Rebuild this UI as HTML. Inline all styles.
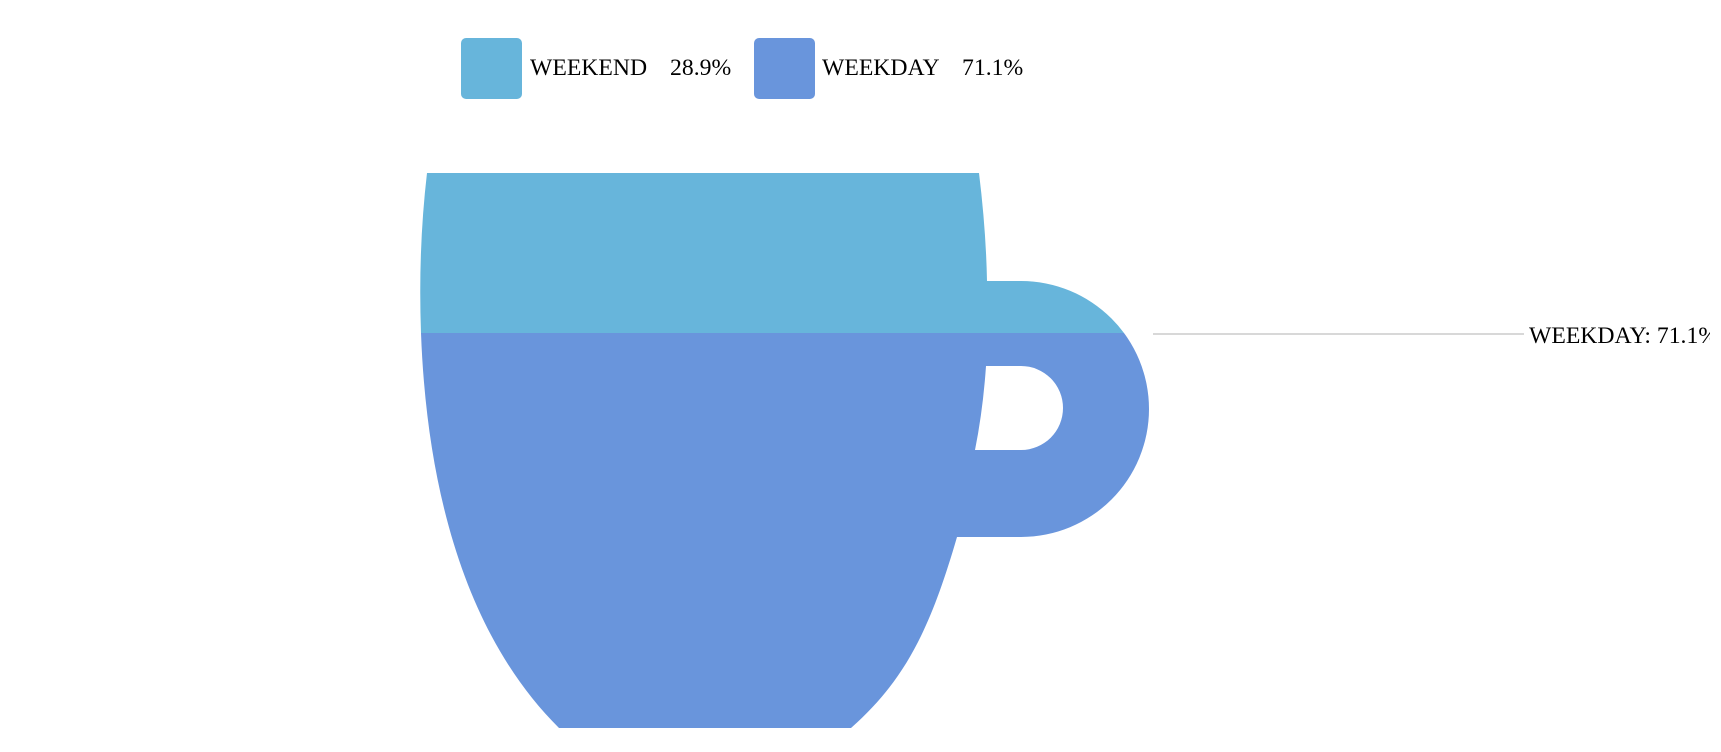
<!DOCTYPE html>
<html><head><meta charset="utf-8"><style>
html,body{margin:0;padding:0;background:#fff;width:1721px;height:752px;overflow:hidden}
svg{display:block}
text{font-family:"Liberation Serif",serif;font-size:23.7px;fill:#000}
</style></head><body>
<svg width="1721" height="752" viewBox="0 0 1721 752">
<defs>
<clipPath id="top"><rect x="0" y="0" width="1721" height="333"/></clipPath>
<clipPath id="bot"><rect x="0" y="333" width="1721" height="500"/></clipPath>
<clipPath id="lbl"><rect x="0" y="0" width="1710" height="752"/></clipPath>
<path id="cup" fill-rule="evenodd" d="M427,173 L979,173 Q986,230 987,281 L1021,281 A128,128 0 0 1 1021,537 L957,537 C930,630 905,680 851,728 L559,728 C480,650 428,520 421,333 Q418,250 427,173 Z M986,366 L1021,366 A42,42 0 0 1 1021,450 L975,450 Q983,410 986,366 Z"/>
</defs>
<rect x="461" y="38" width="61" height="61" rx="5" fill="#67b5db"/>
<text x="530" y="75">WEEKEND</text>
<text x="670" y="75">28.9%</text>
<rect x="754" y="38" width="61" height="61" rx="5" fill="#6995dc"/>
<text x="822" y="75">WEEKDAY</text>
<text x="962" y="75">71.1%</text>
<use href="#cup" fill="#67b5db" clip-path="url(#top)"/>
<use href="#cup" fill="#6995dc" clip-path="url(#bot)"/>
<line x1="1153" y1="334" x2="1524" y2="334" stroke="#ccc" stroke-width="1.5"/>
<text x="1529" y="343" clip-path="url(#lbl)">WEEKDAY: 71.1%</text>
</svg>
</body></html>
